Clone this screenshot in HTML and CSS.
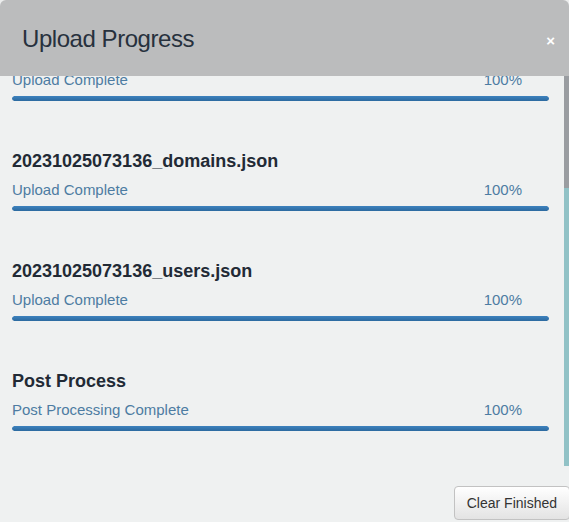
FILE: index.html
```html
<!DOCTYPE html>
<html>
<head>
<meta charset="utf-8">
<link rel="stylesheet" href="styles.css">
</head>
<body>
<div class="modal">
  <div class="modal-header">
    <h4 class="modal-title">Upload Progress</h4>
    <span class="close">×</span>
  </div>
  <div class="modal-body">
    <div class="viewport">
      <div class="list">
        <div class="item partial">
          <div class="status"><span>Upload Complete</span><span>100%</span></div>
          <div class="track"><div class="bar" style="width:100%"></div></div>
        </div>
        <div class="item">
          <div class="name">20231025073136_domains.json</div>
          <div class="status"><span>Upload Complete</span><span>100%</span></div>
          <div class="track"><div class="bar" style="width:100%"></div></div>
        </div>
        <div class="item">
          <div class="name">20231025073136_users.json</div>
          <div class="status"><span>Upload Complete</span><span>100%</span></div>
          <div class="track"><div class="bar" style="width:100%"></div></div>
        </div>
        <div class="item">
          <div class="name">Post Process</div>
          <div class="status"><span>Post Processing Complete</span><span>100%</span></div>
          <div class="track"><div class="bar" style="width:100%"></div></div>
        </div>
      </div>
    </div>
    <div class="scrollbar">
      <div class="thumb"></div>
      <div class="rail"></div>
    </div>
  </div>
  <div class="modal-footer">
    <button class="btn">Clear Finished</button>
  </div>
</div>
</body>
</html>
```

FILE: styles.css
```css
html, body {
  margin: 0;
  padding: 0;
  background: #eceded;
  font-family: "Liberation Sans", Arial, sans-serif;
}

.modal {
  width: 569px;
  height: 522px;
  display: flex;
  flex-direction: column;
  background: #eff1f1;
  border-radius: 6px 6px 0 0;
  overflow: hidden;
}

.modal-header {
  height: 76px;
  flex: none;
  background: #bbbcbd;
  display: flex;
  align-items: center;
  justify-content: space-between;
  padding: 0 14px 0 22px;
}

.modal-title {
  margin: 2px 0 0 0;
  font-size: 24px;
  line-height: 28px;
  font-weight: normal;
  letter-spacing: -0.45px;
  color: #27313d;
}

.close {
  color: #ffffff;
  font-size: 15px;
  font-weight: bold;
  line-height: 15px;
  margin-top: 4px;
}

.modal-body {
  height: 390px;
  flex: none;
  display: flex;
}

.viewport {
  flex: 1;
  overflow: hidden;
}

.list {
  margin-top: -6px;
  padding-left: 12px;
  display: flex;
  flex-direction: column;
  gap: 49px;
}

.item {
  width: 537px;
  display: flex;
  flex-direction: column;
}

.name {
  font-size: 18px;
  line-height: 22px;
  font-weight: bold;
  color: #222a35;
}

.status {
  margin-top: 8px;
  display: flex;
  justify-content: space-between;
  padding-right: 27px;
  font-size: 15px;
  line-height: 20px;
  color: #4d7ca2;
}

.partial .status {
  margin-top: 0;
}

.track {
  margin-top: 6px;
  height: 5px;
  border-radius: 3px;
  background: #dfe3e6;
  overflow: hidden;
}

.bar {
  height: 100%;
  background: linear-gradient(to bottom, #3d82be, #2c6aa0);
  border-radius: 3px;
}

.scrollbar {
  width: 5px;
  margin-left: 15px;
  display: flex;
  flex-direction: column;
}

.thumb {
  height: 112px;
  background: #9a9da1;
}

.rail {
  flex: 1;
  background: #91c2c6;
}

.modal-footer {
  flex: 1;
  display: flex;
  justify-content: flex-end;
  align-items: flex-start;
  padding-top: 20px;
  margin-right: -1px;
}

.btn {
  font-family: "Liberation Sans", Arial, sans-serif;
  font-size: 14px;
  line-height: 18px;
  padding: 7px 12px;
  color: #333333;
  background: linear-gradient(to bottom, #ffffff, #e3e3e3);
  border: 1px solid #c2c2c2;
  border-radius: 4px;
}
```
